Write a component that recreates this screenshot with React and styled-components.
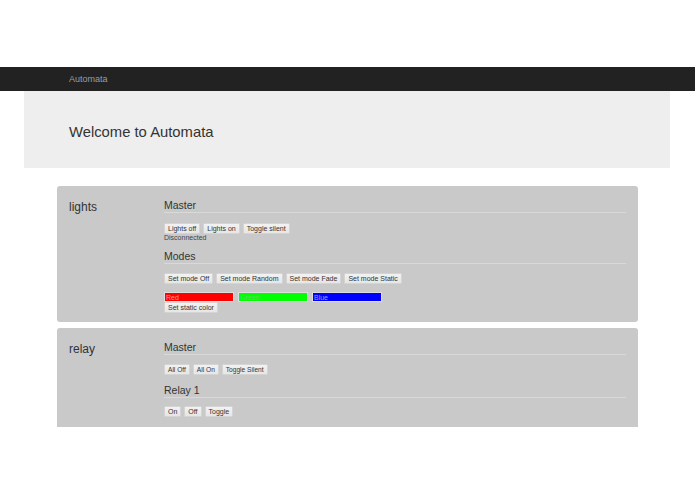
import React from 'react';
import styled, { createGlobalStyle } from 'styled-components';

const GlobalStyle = createGlobalStyle`
  html, body {
    margin: 0;
    padding: 0;
    background: #fff;
    font-family: "Liberation Sans", Arial, sans-serif;
    color: #333;
  }
`;

const Page = styled.div`
  width: 695px;
  height: 494px;
  padding-top: 67px;
  box-sizing: border-box;
  overflow: hidden;
`;

const Navbar = styled.div`
  height: 24px;
  background: #222;
  display: flex;
  align-items: center;
  padding-left: 69px;
`;

const Brand = styled.span`
  font-size: 9px;
  color: #9d9d9d;
`;

const Jumbotron = styled.div`
  margin: 0 25px 0 24px;
  height: 77px;
  box-sizing: border-box;
  padding: 5px 0 0 45px;
  background: #eee;
  display: flex;
  align-items: center;
`;

const Title = styled.h1`
  margin: 0;
  font-size: 14.8px;
  font-weight: normal;
  color: #333;
`;

const Panels = styled.div`
  margin: 18px 57px 0 57px;
  display: flex;
  flex-direction: column;
  gap: 6px;
`;

const Panel = styled.section`
  background: #c9c9c9;
  border-radius: ${p => (p.$clipped ? '3px 3px 0 0' : '3px')};
  display: grid;
  grid-template-columns: 95px 1fr;
  padding: 14px 12px ${p => (p.$clipped ? '10px' : '9px')} 12px;
`;

const DeviceName = styled.div`
  font-size: 12px;
  line-height: 14px;
  color: #333;
`;

const Body = styled.div`
  display: flex;
  flex-direction: column;
`;

const Heading = styled.h3`
  margin: ${p => p.$top || 0}px 0 0 0;
  font-size: 10.5px;
  line-height: 11px;
  font-weight: normal;
  color: #333;
  padding-bottom: 1px;
  border-bottom: 1px solid #d9d9d9;
`;

const ButtonRow = styled.div`
  display: flex;
  gap: 3px;
  margin-top: ${p => p.$top || 0}px;
`;

const Button = styled.button`
  font-family: "Liberation Sans", Arial, sans-serif;
  font-size: ${p => (p.$small ? '6.6px' : '7px')};
  line-height: 9px;
  color: #333;
  padding: 0 3px;
  height: 11px;
  background: linear-gradient(#f2f2f2, #e6e6e6);
  border: 1px solid #d4d4d4;
  border-radius: 1px;
  cursor: pointer;
`;

const Status = styled.div`
  font-size: 7px;
  line-height: 8px;
  color: #444;
`;

const ColorRow = styled.div`
  display: flex;
  gap: 4px;
  margin-top: 8px;
`;

const ColorInput = styled.input`
  width: 70px;
  height: 10px;
  box-sizing: border-box;
  padding: 0 1px;
  font-family: "Liberation Sans", Arial, sans-serif;
  font-size: 7px;
  border: 1px solid #ddd;
  background: ${p => p.$bg};
  color: ${p => p.$fg};
  outline: none;
  &::placeholder {
    color: ${p => p.$fg};
  }
`;

export default function App() {
  return (
    <Page>
      <GlobalStyle />
      <Navbar>
        <Brand>Automata</Brand>
      </Navbar>
      <Jumbotron>
        <Title>Welcome to Automata</Title>
      </Jumbotron>
      <Panels>
        <Panel>
          <DeviceName>lights</DeviceName>
          <Body>
            <Heading>Master</Heading>
            <ButtonRow $top={10}>
              <Button>Lights off</Button>
              <Button>Lights on</Button>
              <Button>Toggle silent</Button>
            </ButtonRow>
            <Status>Disconnected</Status>
            <Heading $top={9}>Modes</Heading>
            <ButtonRow $top={9}>
              <Button>Set mode Off</Button>
              <Button>Set mode Random</Button>
              <Button>Set mode Fade</Button>
              <Button>Set mode Static</Button>
            </ButtonRow>
            <ColorRow>
              <ColorInput placeholder="Red" $bg="#ff0000" $fg="#ff9a9a" />
              <ColorInput placeholder="Green" $bg="#00ff00" $fg="#6ad66a" />
              <ColorInput placeholder="Blue" $bg="#0000ff" $fg="#9a9aff" />
            </ColorRow>
            <ButtonRow>
              <Button>Set static color</Button>
            </ButtonRow>
          </Body>
        </Panel>
        <Panel $clipped>
          <DeviceName>relay</DeviceName>
          <Body>
            <Heading>Master</Heading>
            <ButtonRow $top={9}>
              <Button $small>All Off</Button>
              <Button $small>All On</Button>
              <Button $small>Toggle Silent</Button>
            </ButtonRow>
            <Heading $top={10}>Relay 1</Heading>
            <ButtonRow $top={8}>
              <Button>On</Button>
              <Button>Off</Button>
              <Button>Toggle</Button>
            </ButtonRow>
          </Body>
        </Panel>
      </Panels>
    </Page>
  );
}
